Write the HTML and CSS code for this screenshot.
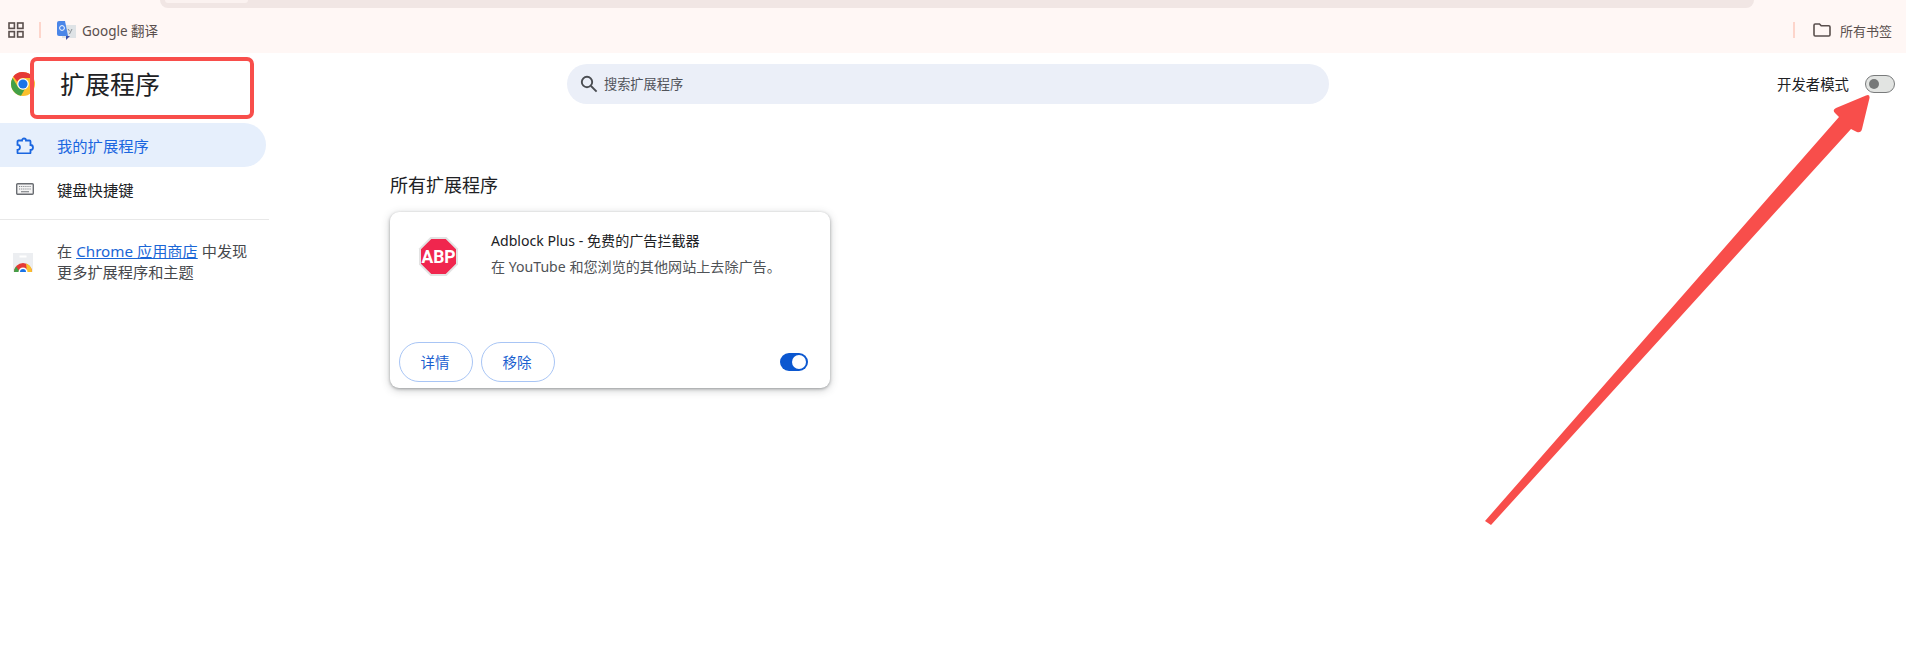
FILE: index.html
```html
<!DOCTYPE html>
<html lang="zh-CN">
<head>
<meta charset="utf-8">
<title>扩展程序</title>
<link rel="stylesheet" href="styles.css">
</head>
<body>
<div class="chrome-top">
  <div class="omnibox"><div class="omni-tab"></div></div>
  <div class="bookmarks">
    <svg class="apps" width="16" height="16" viewBox="0 0 16 16"><g fill="none" stroke="#5a4f4d" stroke-width="1.6"><rect x="1" y="1" width="5.4" height="5.4"/><rect x="9.6" y="1" width="5.4" height="5.4"/><rect x="1" y="9.6" width="5.4" height="5.4"/><rect x="9.6" y="9.6" width="5.4" height="5.4"/></g></svg>
    <span class="sep"></span>
    <svg class="translate" width="19" height="19" viewBox="0 0 19 19"><rect x="5" y="4" width="14" height="13" fill="#dfe3e6"/><path d="M11 8l1.6 2.2M15 8l-2.5 5" stroke="#8a9096" stroke-width="1" fill="none"/><path d="M9 15h4l-4 4z" fill="#3b4fa8"/><path d="M2 0h6l3 15H2a2 2 0 0 1-2-2V2a2 2 0 0 1 2-2z" fill="#4a86e8"/><circle cx="5" cy="7" r="2.4" fill="none" stroke="#fff" stroke-width="1"/></svg>
    <span class="bm-label">Google 翻译</span>
    <span class="bm-spacer"></span>
    <span class="sep"></span>
    <svg class="folder" width="18" height="14" viewBox="0 0 18 14"><path d="M1 2.2C1 1.5 1.5 1 2.2 1h4.3l1.7 1.8h7.600c.7 0 1.200.5 1.200 1.200v7.800c0 .7-.5 1.200-1.200 1.200H2.200c-.7 0-1.200-.5-1.200-1.200z" fill="none" stroke="#5a4f4d" stroke-width="1.6"/></svg>
    <span class="bm-label all">所有书签</span>
  </div>
</div>

<header class="head">
  <div class="brand">
    <svg class="logo" width="24" height="24" viewBox="0 0 24 24"><circle cx="12" cy="12" r="12" fill="#fbc02d"/><path d="M12 0a12 12 0 0 1 10.400 6H12a6 6 0 0 0-5.600 3.800L2.200 4.400A12 12 0 0 1 12 0z" fill="#e53935"/><path d="M1.600 6A12 12 0 0 0 10 23.800L14 16.800a6 6 0 0 1-7.200-2z" fill="#43a047"/><circle cx="12" cy="12" r="5.800" fill="#fff"/><circle cx="12" cy="12" r="4.600" fill="#1a73e8"/></svg>
    <h1 class="title">扩展程序</h1>
  </div>
  <div class="search">
    <svg width="18" height="18" viewBox="0 0 18 18"><circle cx="7" cy="7" r="5.200" fill="none" stroke="#4a4d52" stroke-width="1.9"/><path d="M11 11l5.600 5.600" stroke="#4a4d52" stroke-width="1.9"/></svg>
    <span class="search-label">搜索扩展程序</span>
  </div>
  <div class="dev">
    <span>开发者模式</span>
    <span class="switch-off"><span class="knob-off"></span></span>
  </div>
</header>

<div class="layout">
  <nav class="side">
    <a class="item active">
      <svg width="18" height="18" viewBox="0 0 18 18"><path d="M2.500 4.500H6a2 2 0 0 1 4 0h3.500a1 1 0 0 1 1 1V9a2.500 2.500 0 0 1 0 5v2.500a1 1 0 0 1-1 1h-11a1 1 0 0 1-1-1v-2.700a2.500 2.500 0 0 0 0-5V5.500a1 1 0 0 1 1-1z" fill="none" stroke="#1a66e0" stroke-width="1.800"/></svg>
      <span>我的扩展程序</span>
    </a>
    <a class="item">
      <svg width="18" height="12" viewBox="0 0 18 12"><rect x=".7" y=".7" width="16.600" height="10.600" rx="1" fill="#f4f4f4" stroke="#6a6d72" stroke-width="1.400"/><path d="M3 3.500h12M3 6h12" stroke="#85888c" stroke-width="1.200" stroke-dasharray="1.200 .9"/><path d="M5 8.700h8" stroke="#85888c" stroke-width="1.200"/></svg>
      <span>键盘快捷键</span>
    </a>
    <div class="divider"></div>
    <div class="promo">
      <svg class="store" width="20" height="19" viewBox="0 0 20 19"><rect width="20" height="19" fill="#eceef1"/><rect x="6.500" y="2.500" width="7" height="2" fill="#fff"/><path d="M1 19a9 9 0 0 1 18 0z" fill="#e53935"/><path d="M13 10.500A9 9 0 0 1 19 19h-5z" fill="#fbc02d"/><path d="M1 19a9 9 0 0 1 2-5.600L7 19z" fill="#43a047"/><path d="M5.500 19a4.500 4.500 0 0 1 9 0z" fill="#fff"/><path d="M7 19a3 3 0 0 1 6 0z" fill="#1a73e8"/></svg>
      <p>在 <a class="link">Chrome 应用商店</a> 中发现<br>更多扩展程序和主题</p>
    </div>
  </nav>

  <main class="content">
    <h2 class="section">所有扩展程序</h2>
    <article class="card">
      <div class="card-top">
        <svg class="abp" width="39" height="39" viewBox="0 0 39 39"><polygon points="11.500,0 27.500,0 39,11.500 39,27.500 27.500,39 11.500,39 0,27.500 0,11.500" fill="#e3e3e3"/><polygon points="12.300,2 26.700,2 37,12.300 37,26.700 26.700,37 12.300,37 2,26.700 2,12.300" fill="#f0264e"/><text x="19.500" y="26" text-anchor="middle" class="abp-text">ABP</text></svg>
        <div class="card-text">
          <div class="name">Adblock Plus - 免费的广告拦截器</div>
          <div class="desc">在 YouTube 和您浏览的其他网站上去除广告。</div>
        </div>
      </div>
      <div class="card-foot">
        <button class="btn"><span class="btn-label">详情</span></button>
        <button class="btn"><span class="btn-label">移除</span></button>
        <span class="switch-on"><span class="knob-on"></span></span>
      </div>
    </article>
  </main>
</div>

<svg class="arrow" width="1906" height="665" viewBox="0 0 1906 665"><path d="M1485 521L1839 117L1835 113Q1832 110 1836 108L1866 95.500Q1870 94 1869.500 98L1862 129Q1861 133 1857 132L1851 129L1491 525z" fill="#f84e4b"/></svg>
<div class="redbox"></div>
</body>
</html>
```

FILE: styles.css
```css
* { box-sizing: border-box; }
html, body { margin: 0; height: 665px; overflow: hidden; background: #fff; }
body { position: relative; font-family: "Noto Sans", "Noto Sans CJK SC", sans-serif; color: #202124; }
.chrome-top { height: 53px; background: #fff7f5; }
.omnibox { height: 8px; margin: 0 152px 0 160px; padding-left: 5px; background: #f1e6e4; border-radius: 0 0 10px 10px; }
.omni-tab { width: 83px; height: 3px; background: #fbf2f0; border-radius: 0 0 6px 6px; }
.bookmarks { height: 45px; display: flex; align-items: center; padding: 0 14px 1px 8px; color: #5a4f4d; font-size: 13.500px; }
.apps { flex: none; }
.sep { width: 2px; height: 16px; background: #fdd5cb; margin: 0 15px 0 15px; flex: none; }
.translate { margin: 0 5px 0 1px; flex: none; }
.bm-label { white-space: nowrap; margin-left: 1px; }
.bm-spacer { flex: 1; }
.folder { margin: 0 8px 0 3px; flex: none; }
.bm-label.all { font-size: 13px; }

.head { height: 70px; display: flex; align-items: flex-start; }
.brand { width: 567px; display: flex; align-items: center; height: 62px; padding-left: 11px; flex: none; }
.title { margin: 0 0 0 25px; font-size: 25px; font-weight: 400; color: #202124; line-height: 32px; }
.search { width: 762px; height: 40px; margin-top: 11px; border-radius: 20px; background: #ebeff8; display: flex; align-items: center; padding-left: 13px; gap: 6px; font-size: 13.200px; color: #50535a; flex: none; }
.search-label { margin-bottom: 2px; }
.dev { flex: 1; height: 60px; display: flex; align-items: center; justify-content: flex-end; padding-right: 11px; font-size: 14.400px; gap: 16px; }
.switch-off { width: 30px; height: 18px; border-radius: 9px; background: #e2e4e2; border: 1px solid #797b7c; display: flex; align-items: center; padding-left: 3px; margin-top: 2px; }
.knob-off { width: 10px; height: 10px; border-radius: 50%; background: #767878; }

.layout { display: flex; }
.side { width: 270px; flex: none; }
.item { height: 44px; width: 266px; display: flex; align-items: center; padding-left: 16px; gap: 23px; font-size: 15.300px; color: #202124; border-radius: 0 22px 22px 0; }
.item svg { width: 18px; flex: none; }
.active { background: #e6effc; color: #1a66e0; }
.divider { height: 1px; background: #e8e8e8; margin-top: 8px; width: 269px; }
.promo { display: flex; align-items: center; padding: 21px 0 0 13px; gap: 24px; font-size: 15.200px; line-height: 21px; color: #46484c; }
.store { flex: none; margin-top: 0; }
.promo p { margin: 0; }
.link { color: #1a66d6; text-decoration: underline; }

.content { padding: 0 0 0 120px; }
.section { margin: 0; padding-top: 49px; font-size: 18px; font-weight: 400; line-height: 26px; color: #202124; height: 89px; }
.card { width: 440px; height: 176px; border-radius: 9px; background: #fff; box-shadow: 0 1px 3px rgba(60,64,67,.4), 0 2px 8px rgba(60,64,67,.28); display: flex; flex-direction: column; }
.card-top { flex: 1; display: flex; padding: 25px 0 0 29px; }
.abp { flex: none; overflow: visible; }
.abp-text { font: 700 17.500px Roboto, sans-serif; fill: #fff; }
.card-text { margin: -9px 0 0 33px; font-size: 14.100px; }
.name { line-height: 26px; color: #202124; }
.desc { line-height: 26px; color: #4f5256; }
.card-foot { height: 46px; margin-bottom: 3px; display: flex; align-items: center; padding: 0 22px 0 9px; gap: 8px; }
.btn { width: 74px; height: 40px; border-radius: 20px; border: 1px solid #a8c5f5; background: #fff; color: #1a5fd0; font: 14.500px "Noto Sans", "Noto Sans CJK SC", sans-serif; padding: 0 2px 2px 0; }
.switch-on { margin-left: auto; width: 28px; height: 18px; border-radius: 9px; background: #0b57d0; display: flex; align-items: center; justify-content: flex-end; padding-right: 2px; }
.knob-on { width: 14px; height: 14px; border-radius: 50%; background: #fff; }

.arrow { position: absolute; left: 0; top: 0; pointer-events: none; }
.redbox { position: absolute; left: 30px; top: 57px; width: 224px; height: 62px; border: 4px solid #f84e4b; border-radius: 7px; pointer-events: none; }
```
